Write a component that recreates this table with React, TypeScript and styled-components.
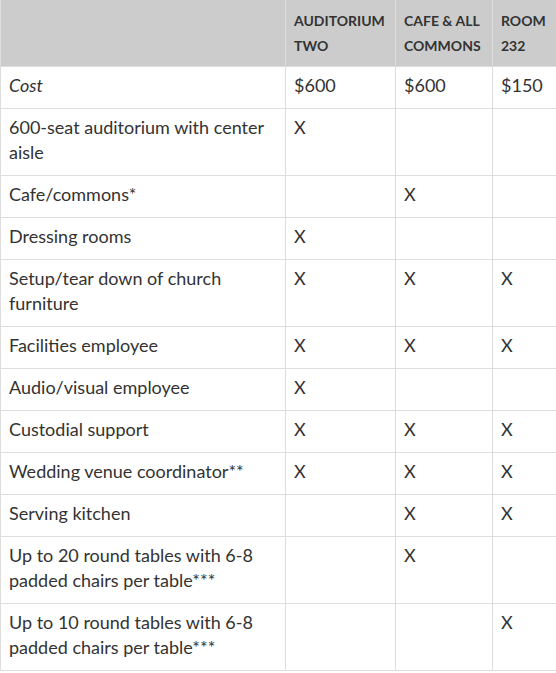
import React from "react";
import styled, { createGlobalStyle } from "styled-components";

const Global = createGlobalStyle`
  html, body { margin: 0; padding: 0; background: #fff; }
  body { font-family: Lato, "Open Sans", sans-serif; color: #333; }
`;

const Table = styled.table`
  border-collapse: collapse;
  width: 556px;
  table-layout: fixed;
  font-family: Lato, sans-serif;
  font-size: 18px;
  line-height: 25px;
  color: #333;
`;

const Col = styled.col<{ $w: number }>`
  width: ${(p) => p.$w}px;
`;

const HeadCell = styled.th`
  background: #cccccc;
  border: 1px solid #dddddd;
  border-top: none;
  padding: 8px 8px;
  text-align: left;
  vertical-align: top;
  font-size: 14px;
  font-weight: 700;
  text-transform: uppercase;
  color: #333;
`;

const Cell = styled.td<{ $italic?: boolean }>`
  border: 1px solid #dddddd;
  padding: 6px 8px 10px;
  vertical-align: top;
  text-align: left;
  font-style: ${(p) => (p.$italic ? "italic" : "normal")};
`;

type Row = { label: string; italic?: boolean; cells: string[] };

const widths = [285, 110, 97, 64];

const rows: Row[] = [
  { label: "Cost", italic: true, cells: ["$600", "$600", "$150"] },
  { label: "600-seat auditorium with center aisle", cells: ["X", "", ""] },
  { label: "Cafe/commons*", cells: ["", "X", ""] },
  { label: "Dressing rooms", cells: ["X", "", ""] },
  { label: "Setup/tear down of church furniture", cells: ["X", "X", "X"] },
  { label: "Facilities employee", cells: ["X", "X", "X"] },
  { label: "Audio/visual employee", cells: ["X", "", ""] },
  { label: "Custodial support", cells: ["X", "X", "X"] },
  { label: "Wedding venue coordinator**", cells: ["X", "X", "X"] },
  { label: "Serving kitchen", cells: ["", "X", "X"] },
  { label: "Up to 20 round tables with 6-8 padded chairs per table***", cells: ["", "X", ""] },
  { label: "Up to 10 round tables with 6-8 padded chairs per table***", cells: ["", "", "X"] },
];

export default function App() {
  return (
    <>
      <Global />
      <Table>
        <colgroup>
          {widths.map((w, i) => (
            <Col key={i} $w={w} />
          ))}
        </colgroup>
        <thead>
          <tr>
            <HeadCell></HeadCell>
            <HeadCell>Auditorium Two</HeadCell>
            <HeadCell>Cafe &amp; All Commons</HeadCell>
            <HeadCell>Room 232</HeadCell>
          </tr>
        </thead>
        <tbody>
          {rows.map((r) => (
            <tr key={r.label}>
              <Cell $italic={r.italic}>{r.label}</Cell>
              {r.cells.map((c, i) => (
                <Cell key={i}>{c}</Cell>
              ))}
            </tr>
          ))}
        </tbody>
      </Table>
    </>
  );
}
